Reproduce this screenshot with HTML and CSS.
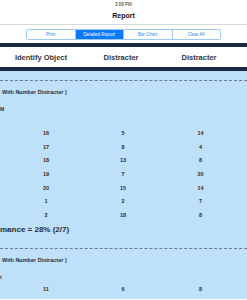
FILE: index.html
```html
<!DOCTYPE html>
<html>
<head>
<meta charset="utf-8">
<link rel="stylesheet" href="styles.css">
</head>
<body>
<div class="screen">
  <div class="status">3:09 PM</div>
  <div class="nav">Report</div>
  <div class="toolbar">
    <div class="segmented">
      <div class="seg">Print</div>
      <div class="seg active">Detailed Report</div>
      <div class="seg">Bar Chart</div>
      <div class="seg">Clear All</div>
    </div>
  </div>
  <div class="thead">
    <div class="col">Identify Object</div>
    <div class="col">Distracter</div>
    <div class="col">Distracter</div>
  </div>
  <div class="content">
    <div class="section">
      <div class="sec-title">With Number Distracter )</div>
      <div class="sub">M</div>
      <div class="rows">
        <div class="row"><span>16</span><span>5</span><span>14</span></div>
        <div class="row"><span>17</span><span>8</span><span>4</span></div>
        <div class="row"><span>18</span><span>13</span><span>8</span></div>
        <div class="row"><span>19</span><span>7</span><span>20</span></div>
        <div class="row"><span>20</span><span>15</span><span>14</span></div>
        <div class="row"><span>1</span><span>2</span><span>7</span></div>
        <div class="row"><span>2</span><span>18</span><span>8</span></div>
      </div>
      <div class="perf">mance = 28% (2/7)</div>
    </div>
    <div class="section">
      <div class="sec-title">With Number Distracter )</div>
      <div class="sub">t</div>
      <div class="rows rows-tight">
        <div class="row"><span>11</span><span>6</span><span>8</span></div>
      </div>
    </div>
  </div>
</div>
</body>
</html>
```
FILE: styles.css
```css
html, body {
  margin: 0;
  padding: 0;
}
body {
  width: 247px;
  height: 300px;
  overflow: hidden;
  background: #ffffff;
  font-family: "Liberation Sans", Arial, sans-serif;
  color: #2b2f36;
}
.screen {
  display: flex;
  flex-direction: column;
}
.status {
  height: 9px;
  line-height: 9px;
  font-size: 4.5px;
  text-align: center;
  color: #222;
}
.nav {
  height: 15px;
  line-height: 14px;
  font-size: 7px;
  font-weight: bold;
  text-align: center;
  color: #111;
  border-bottom: 1px solid #d8d8d8;
}
.toolbar {
  height: 18px;
  display: flex;
  justify-content: center;
  align-items: center;
}
.segmented {
  display: flex;
  width: 195px;
  height: 11px;
  border: 1px solid #9cc8f4;
  border-radius: 1.5px;
  box-sizing: border-box;
  overflow: hidden;
}
.seg {
  flex: 1;
  font-size: 4.5px;
  line-height: 9px;
  text-align: center;
  color: #2a86e8;
  border-left: 1px solid #9cc8f4;
}
.seg:first-child {
  border-left: none;
}
.seg.active {
  background: #0a7aff;
  color: #ffffff;
}
.thead {
  display: grid;
  grid-template-columns: 82px 78px 78px;
  height: 20px;
  border-top: 4px solid #1e2a45;
  border-bottom: 4px solid #1e2a45;
  align-items: center;
  font-size: 7.5px;
  font-weight: bold;
  color: #33363c;
}
.thead .col {
  text-align: center;
}
.content {
  background: #bee0f8;
  flex: 1;
  padding-top: 9px;
}
.section {
  border-top: 1px dashed #6a7c8c;
}
.sec-title {
  padding-left: 2px;
  margin-top: 7px;
  font-size: 5.5px;
  font-weight: bold;
  line-height: 8px;
}
.sub {
  margin-top: 10px;
  font-size: 5px;
  font-weight: bold;
  line-height: 6px;
  padding-left: 0;
}
.rows {
  margin-top: 17px;
  display: flex;
  flex-direction: column;
}
.rows-tight {
  margin-top: 5px;
}
.row {
  display: grid;
  grid-template-columns: 92px 62px 93px;
  height: 13.7px;
  line-height: 8px;
  font-size: 5.5px;
  font-weight: bold;
}
.row span {
  text-align: center;
}
.perf {
  font-size: 8px;
  font-weight: bold;
  line-height: 10px;
  margin-top: 0;
  margin-bottom: 13px;
}
```
